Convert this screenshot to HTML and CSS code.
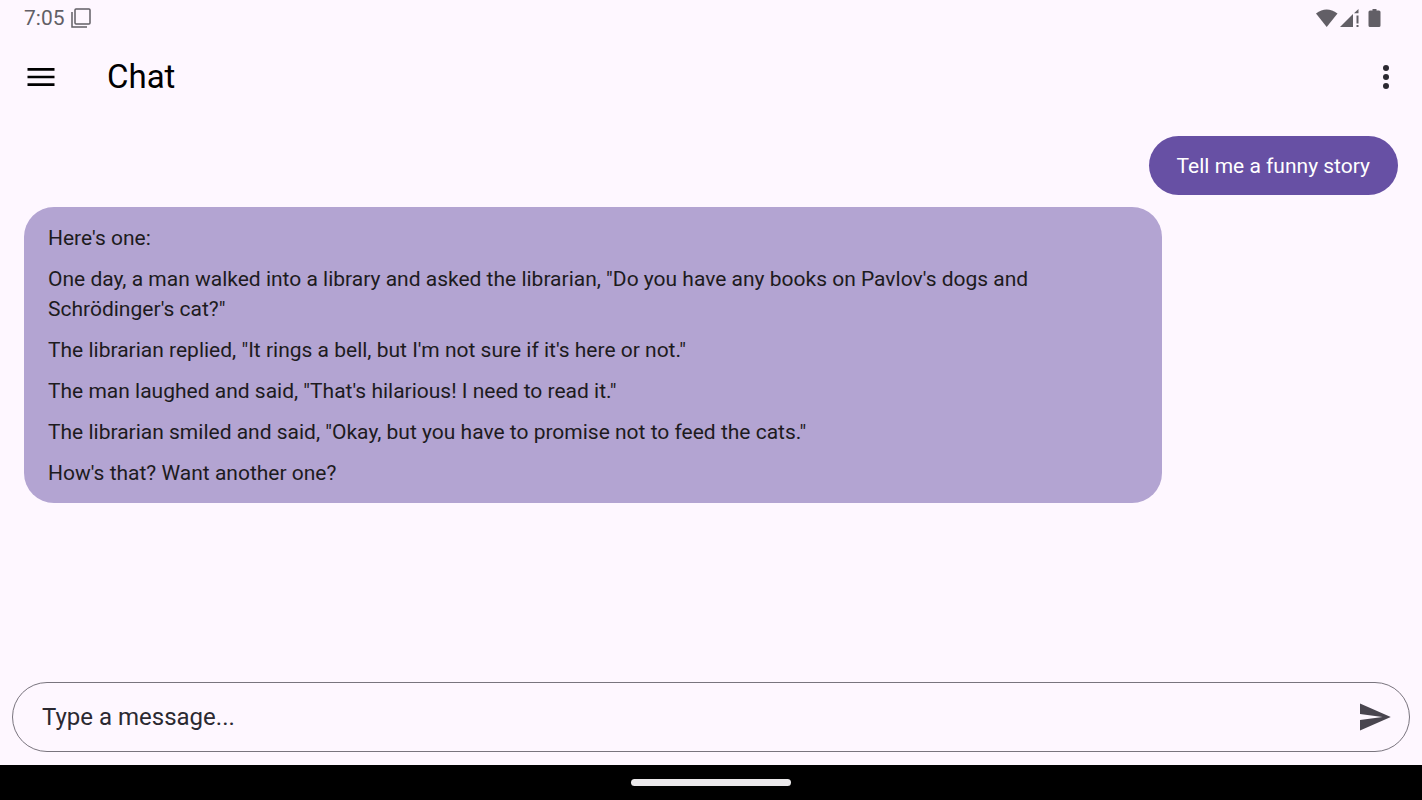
FILE: index.html
```html
<!DOCTYPE html>
<html lang="en">
<head>
    <meta charset="UTF-8">
    <meta name="viewport" content="width=device-width, initial-scale=1.0">
    <title>Chat</title>
    <link rel="stylesheet" href="styles.css">
</head>
<body>
    <div class="status-bar">
        <div class="status-left">
            <span>7:05</span>
            <svg width="20" height="20" viewBox="0 0 20 20" fill="none" stroke="#625f66" stroke-width="1.5">
                <rect x="4" y="1" width="15" height="15" rx="1"/>
                <path d="M1 4v15h15"/>
            </svg>
        </div>
        <div class="status-right">
            <svg width="68" height="20" viewBox="0 0 68 20" fill="#625f66">
                <path d="M1 5.5Q11.500-2.500 22.500 5.500L11.700 19Z"/>
                <path d="M25 19L38 6V19Z"/>
                <path d="M39 5.200L43.500 1V5.200Z"/>
                <path d="M41.500 7.500h2v8h-2zM41.500 17h2v2h-2z"/>
                <path d="M57.500 1h4v1.500H64a1.500 1.500 0 0 1 1.500 1.500v13.500a1.500 1.500 0 0 1-1.500 1.500h-9a1.500 1.500 0 0 1-1.500-1.500V4a1.500 1.500 0 0 1 1.500-1.500h2.500z"/>
            </svg>
        </div>
    </div>

    <header class="app-bar">
        <button class="icon-btn" aria-label="Open menu">
            <svg width="36" height="36" viewBox="0 0 24 24" fill="#000"><path d="M3 18h18v-1.800H3zM3 12.900h18v-1.800H3zM3 6v1.800h18V6z"/></svg>
        </button>
        <h1>Chat</h1>
        <button class="icon-btn" aria-label="More options">
            <svg width="36" height="36" viewBox="0 0 24 24" fill="#2b2931"><circle cx="12" cy="6" r="2"/><circle cx="12" cy="12" r="2"/><circle cx="12" cy="18" r="2"/></svg>
        </button>
    </header>

    <main class="messages">
        <div class="bubble user">
            <p>Tell me a funny story</p>
        </div>
        <div class="bubble bot">
            <p>Here's one:</p>
            <p>One day, a man walked into a library and asked the librarian, "Do you have any books on Pavlov's dogs and Schrödinger's cat?"</p>
            <p>The librarian replied, "It rings a bell, but I'm not sure if it's here or not."</p>
            <p>The man laughed and said, "That's hilarious! I need to read it."</p>
            <p>The librarian smiled and said, "Okay, but you have to promise not to feed the cats."</p>
            <p>How's that? Want another one?</p>
        </div>
    </main>

    <form class="composer">
        <input type="text" aria-label="Message" placeholder="Type a message...">
        <button class="icon-btn" type="button" aria-label="Send">
            <svg width="36" height="36" viewBox="0 0 24 24" fill="#49454f"><path d="M2 21L22.500 12 2 3v7l15 2-15 2z"/></svg>
        </button>
    </form>

    <div class="nav-bar">
        <div class="nav-handle"></div>
    </div>
</body>
</html>
```

FILE: styles.css
```css
* {
    box-sizing: border-box;
}
body {
    margin: 0;
    min-height: 100vh;
    display: flex;
    flex-direction: column;
    background-color: #fef7ff;
    color: #1d1b20;
    font-family: Roboto, sans-serif;
}
svg {
    display: block;
}
.status-bar {
    display: flex;
    justify-content: space-between;
    align-items: center;
    height: 36px;
    padding: 0 39px 0 24px;
}
.status-left {
    display: flex;
    align-items: center;
    gap: 6px;
    color: #625f66;
    font-size: 21px;
}
.app-bar {
    display: flex;
    align-items: center;
    height: 82px;
    padding: 0 18px 0 23px;
}
.app-bar h1 {
    flex: 1;
    margin: 0 0 0 48px;
    color: #000;
    font-size: 33px;
    font-weight: 400;
    line-height: 40px;
}
.icon-btn {
    padding: 0;
    border: none;
    background: none;
    cursor: pointer;
}
.messages {
    flex: 1;
    display: flex;
    flex-direction: column;
    gap: 12px;
    padding: 18px 24px;
}
.bubble {
    max-width: 80vw;
    padding: 16px 24px 15px;
    border-radius: 30px;
    font-size: 21px;
    line-height: 30px;
}
.bubble p {
    margin: 0;
}
.bubble p + p {
    margin-top: 11px;
}
.user {
    align-self: flex-end;
    padding: 15px 28px 14px;
    background-color: #6750a4;
    color: #fff;
}
.bot {
    align-self: flex-start;
    background-color: #b3a4d2;
}
.composer {
    display: flex;
    align-items: center;
    height: 70px;
    margin: 0 12px 13px;
    padding: 0 16px 0 29px;
    border: 1px solid #79747e;
    border-radius: 36px;
}
.composer input {
    flex: 1;
    min-width: 0;
    padding: 0;
    border: none;
    outline: none;
    background: none;
    color: #1d1b20;
    font-family: inherit;
    font-size: 24px;
}
.composer input::placeholder {
    color: #2b2931;
    opacity: 1;
}
.nav-bar {
    display: flex;
    justify-content: center;
    align-items: center;
    height: 35px;
    background-color: #000;
}
.nav-handle {
    width: 160px;
    height: 7px;
    border-radius: 4px;
    background-color: #ebe9eb;
}
```
